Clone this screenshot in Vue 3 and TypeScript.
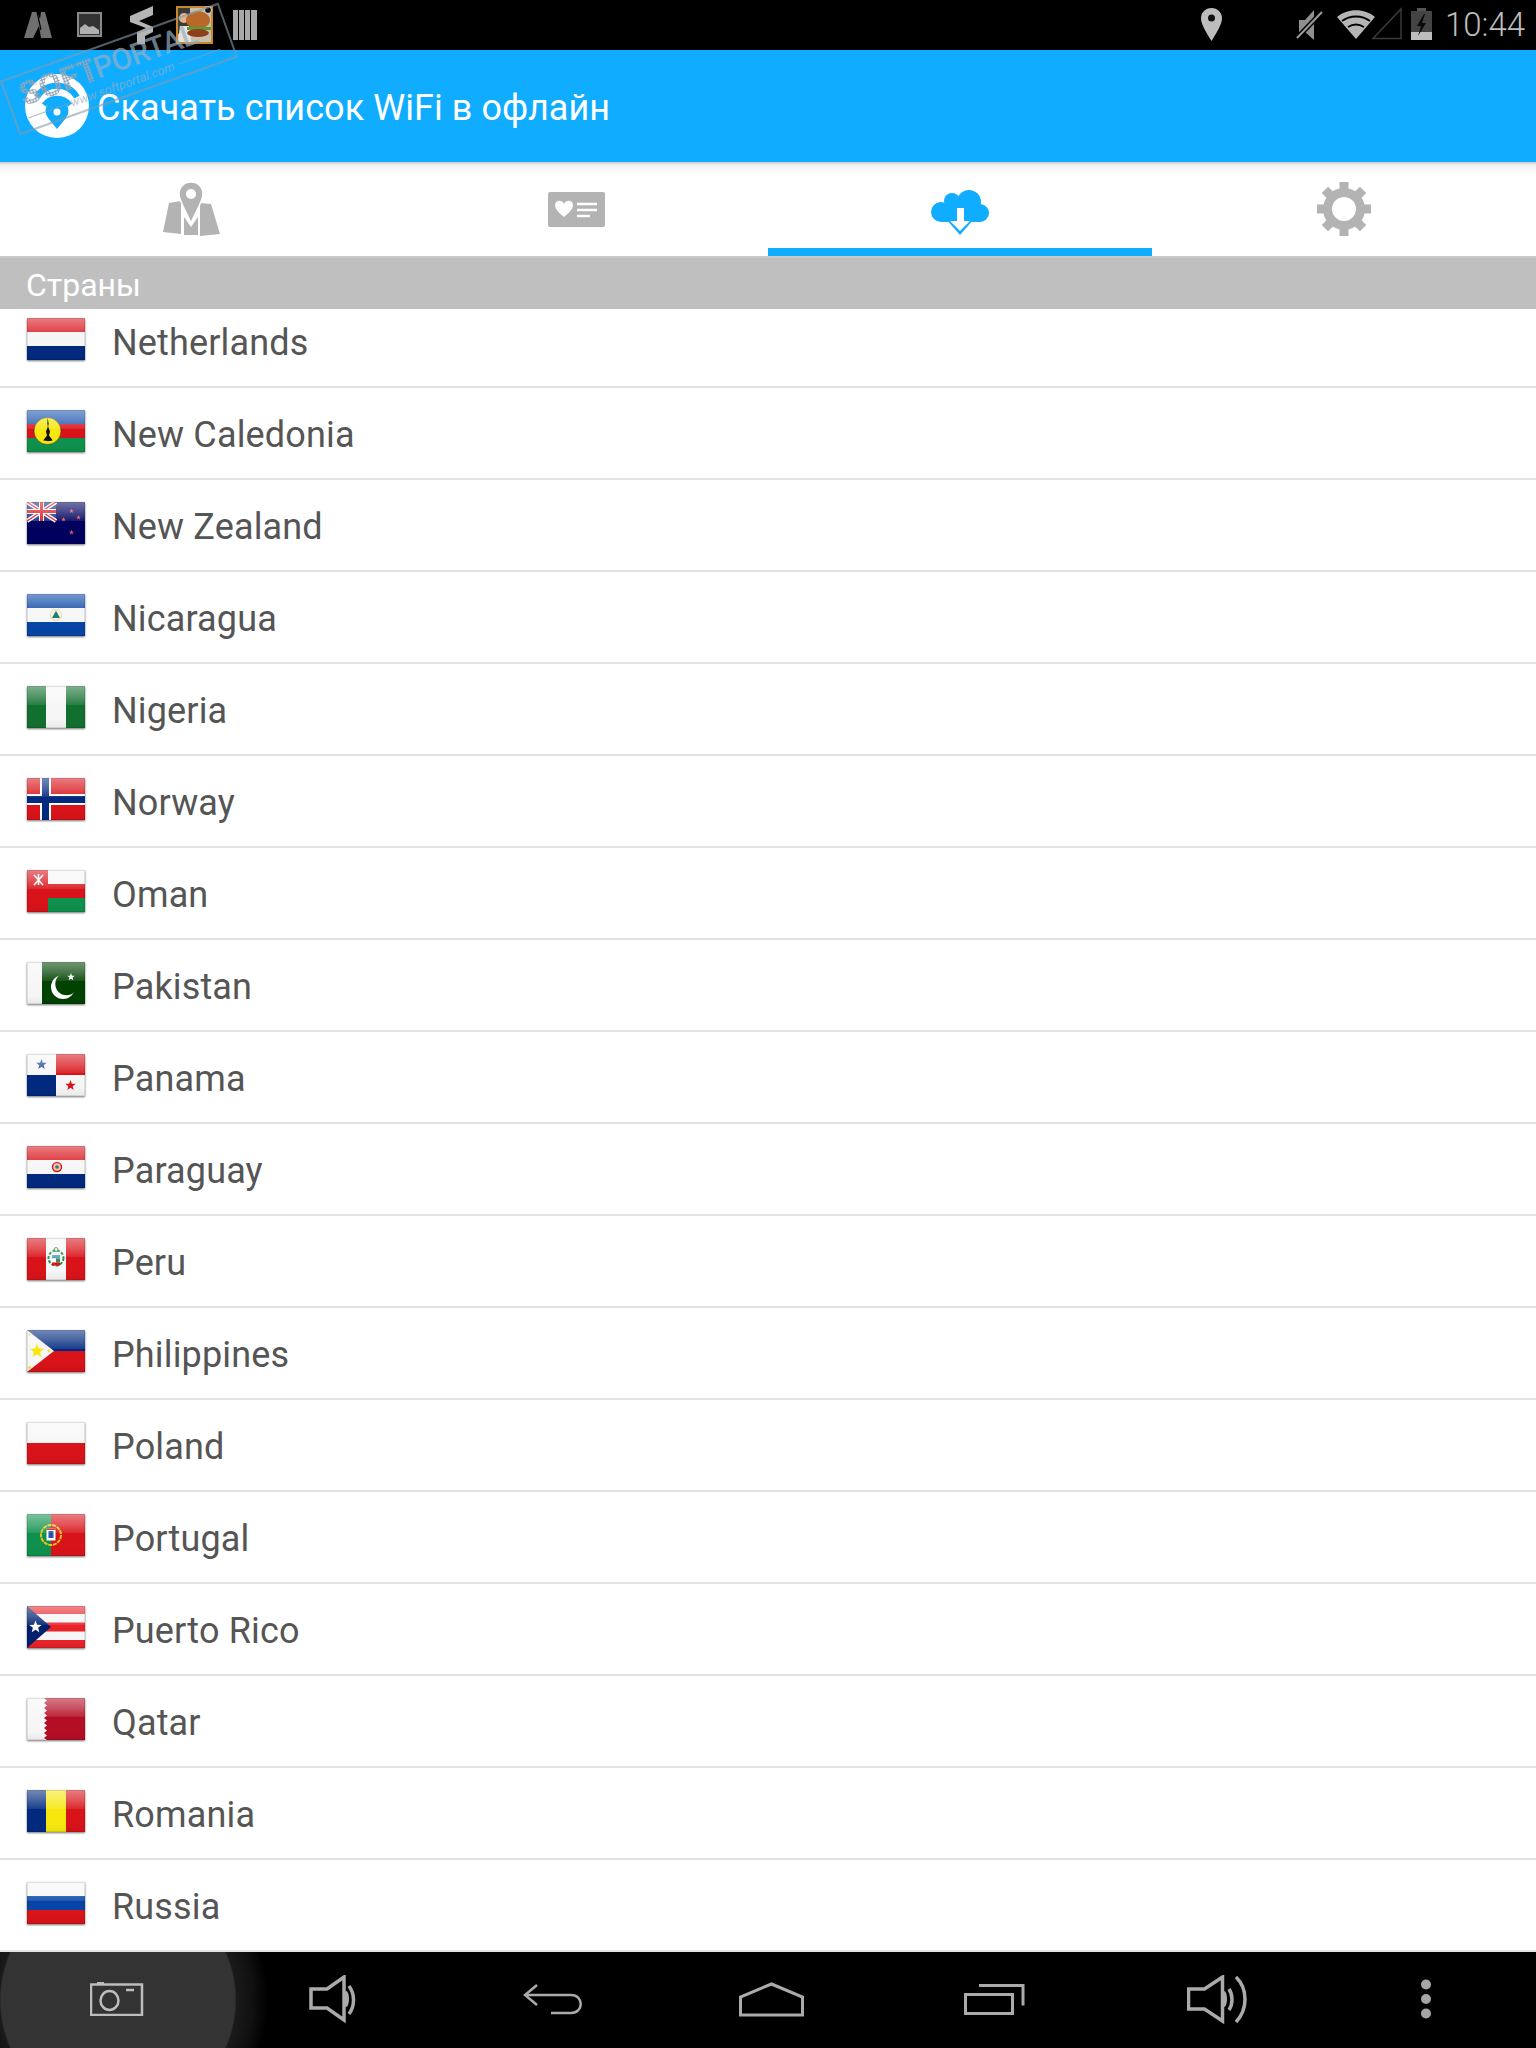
<script setup lang="ts">
const red = '#d81319'
const navy = '#012a7f'
const blue = '#0645a5'
const white = '#f6f6f6'
const green = '#0f914d'
const dark = '#12702f'

function rect(x: number, y: number, w: number, h: number, fill: string) {
  return `<rect x="${x}" y="${y}" width="${w}" height="${h}" fill="${fill}"/>`
}

function circle(cx: number, cy: number, r: number, fill: string, extra = '') {
  return `<circle cx="${cx}" cy="${cy}" r="${r}" fill="${fill}" ${extra}/>`
}

function star(cx: number, cy: number, r: number, fill: string) {
  const pts: string[] = []
  for (let i = 0; i < 10; i++) {
    const a = -Math.PI / 2 + (i * Math.PI) / 5
    const d = i % 2 ? r * 0.42 : r
    pts.push(`${(cx + d * Math.cos(a)).toFixed(2)},${(cy + d * Math.sin(a)).toFixed(2)}`)
  }
  return `<polygon points="${pts.join(' ')}" fill="${fill}"/>`
}

function bands(top: string, mid: string, bottom: string) {
  return rect(0, 0, 58, 14, top) + rect(0, 14, 58, 14, mid) + rect(0, 28, 58, 14, bottom)
}

function pales(left: string, mid: string, right: string) {
  return rect(0, 0, 19, 42, left) + rect(19, 0, 20, 42, mid) + rect(39, 0, 19, 42, right)
}

const countries = [
  { name: 'Netherlands', art: bands(red, white, navy) },
  {
    name: 'New Caledonia',
    art: bands('#1f55b0', red, green) + circle(20.5, 21, 13.5, '#f7e70f', 'stroke="#222" stroke-width=".5"')
      + '<path d="M20.500 7.500l1.300 6-.6 3 1.800 5-1 4 3.500 4.500c1 1.500-10 1.500-9 0l3.500-4.500-1-4 1.800-5-.6-3z" fill="#111"/>',
  },
  {
    name: 'New Zealand',
    art: rect(0, 0, 58, 42, '#00005e') + rect(0, 0, 29, 19, '#1a2a80')
      + '<path d="M0 0l29 19M29 0L0 19" stroke="#fff" stroke-width="4"/>'
      + '<path d="M0 0l29 19M29 0L0 19" stroke="#d81319" stroke-width="1.4"/>'
      + rect(12, 0, 5, 19, '#fff') + rect(0, 7, 29, 5, '#fff') + rect(13, 0, 3, 19, red) + rect(0, 8, 29, 3, red)
      + star(44.5, 9, 2.4, '#e0525c') + star(51.5, 15.5, 2.4, '#e0525c') + star(36.5, 17.5, 2.4, '#e0525c') + star(44.5, 30.5, 2.6, '#e0525c'),
  },
  {
    name: 'Nicaragua',
    art: bands(blue, white, blue) + circle(29, 21, 5.5, 'none', 'stroke="#e8dd8a" stroke-width="1"')
      + '<polygon points="29,16.5 33,24 25,24" fill="#1d7f70"/>',
  },
  { name: 'Nigeria', art: pales(dark, white, dark) },
  {
    name: 'Norway',
    art: rect(0, 0, 58, 42, red) + rect(13, 0, 11, 42, '#fff') + rect(0, 16, 58, 11, '#fff') + rect(15, 0, 7, 42, navy) + rect(0, 18, 58, 7, navy),
  },
  {
    name: 'Oman',
    art: rect(0, 0, 58, 42, red) + rect(21, 0, 37, 14, white) + rect(21, 28, 37, 14, green)
      + '<path d="M7 5l9 10M16 5L7 15M11.5 4v11" stroke="#fff" stroke-width="1.600"/>',
  },
  {
    name: 'Pakistan',
    art: rect(0, 0, 15, 42, white) + rect(15, 0, 43, 42, '#004200') + circle(36, 25, 12, '#fff') + circle(39.5, 22, 11.2, '#004200')
      + star(44, 15, 4, '#fff'),
  },
  {
    name: 'Panama',
    art: rect(0, 0, 29, 21, white) + rect(29, 0, 29, 21, red) + rect(0, 21, 29, 21, navy) + rect(29, 21, 29, 21, white)
      + star(14.5, 10.5, 5.5, '#1a45a0') + star(43.5, 31.5, 5.5, red),
  },
  {
    name: 'Paraguay',
    art: bands(red, white, navy) + circle(30, 21, 4.5, '#e8c8a0', `stroke="${red}" stroke-width="1.4"`) + circle(30, 21, 1.8, '#3a6fa8'),
  },
  {
    name: 'Peru',
    art: pales(red, white, red) + circle(29, 20, 7.5, 'none', 'stroke="#2d8a4b" stroke-width="2" stroke-dasharray="3 1.5"')
      + rect(25, 17, 8, 3.5, '#5aa4c8') + rect(25, 20.5, 4, 4, '#fff') + rect(29, 20.5, 4, 4, '#3d8f50') + rect(25, 24.5, 8, 3, red)
      + circle(29, 11.5, 2, 'none', 'stroke="#2d8a4b" stroke-width="1"'),
  },
  {
    name: 'Philippines',
    art: rect(0, 0, 58, 21, navy) + rect(0, 21, 58, 21, red) + '<polygon points="0,0 27,21 0,42" fill="#f6f6f6"/>'
      + star(10, 21, 7.5, '#f7e70f') + circle(10, 21, 3.6, '#f7e70f') + star(2.5, 4.5, 2, '#f0d820') + star(2.5, 37.5, 2, '#f0d820') + star(22, 21, 2, '#f0d820'),
  },
  { name: 'Poland', art: rect(0, 0, 58, 21, white) + rect(0, 21, 58, 21, red) },
  {
    name: 'Portugal',
    art: rect(0, 0, 24, 42, green) + rect(24, 0, 34, 42, red) + circle(24, 21, 10, 'none', 'stroke="#e8c81a" stroke-width="2" stroke-dasharray="4 .8"')
      + rect(19.5, 14.5, 9, 12, '#fff') + rect(21.5, 17, 5, 7, '#2a55a5') + rect(19.5, 14.5, 9, 1.5, red),
  },
  {
    name: 'Puerto Rico',
    art: rect(0, 0, 58, 42, '#e8232a') + rect(0, 8, 58, 8.5, white) + rect(0, 25.5, 58, 8.5, white)
      + '<polygon points="0,0 24,21 0,42" fill="#00206e"/>' + star(8.5, 21, 6.5, '#fff'),
  },
  {
    name: 'Qatar',
    art: rect(0, 0, 58, 42, '#b40e25')
      + '<polygon points="0,0 17,0 20,2.5 17,5 20,7.5 17,10 20,12.5 17,15 20,17.5 17,20 20,22.5 17,25 20,27.5 17,30 20,32.5 17,35 20,37.5 17,40 20,42 0,42" fill="#f6f6f6"/>',
  },
  { name: 'Romania', art: pales(navy, '#f7e70f', red) },
  { name: 'Russia', art: bands(white, blue, red) },
]

const gearAngles = [0, 45, 90, 135, 180, 225, 270, 315]
</script>

<template>
  <div class="screen">
    <header class="status">
      <svg class="notif" width="270" height="50" viewBox="0 0 270 50" aria-hidden="true">
        <path d="M24 38 32 12h5l3 7 1-7h4l7 26H41l-2-12-6 12z" fill="#707070" />
        <path d="M37 12l4 18" stroke="#000" stroke-width="1.200" />
        <rect x="78" y="13" width="23" height="23" fill="#333" stroke="#8a8a8a" stroke-width="2" />
        <path d="M80 34V28l5-4 4 3 4-1 6 4v4z" fill="#b0b0b0" />
        <path d="M130 16 153 6v9l-14 6 14 6v5l-8 4v8h-8V32l9-4-16-6z" fill="#b5b5b5" />
        <rect x="177" y="7" width="35" height="36" fill="#c9bfae" stroke="#c8872a" stroke-width="2" />
        <path d="M178 8h12v20l-12 6z" fill="#3a3a38" />
        <circle cx="184" cy="18" r="5" fill="#e3b48c" />
        <path d="M180 26h9l2 16h-13z" fill="#e9e4da" />
        <ellipse cx="198" cy="20" rx="12" ry="9" fill="#b8692a" />
        <rect x="187" y="27" width="24" height="3" fill="#5d9a35" />
        <ellipse cx="198" cy="33" rx="11" ry="4" fill="#8e3f1e" />
        <circle cx="208" cy="10" r="3.500" fill="#111" stroke="#ddd" />
        <g fill="#a8a8a8">
          <rect x="233" y="10" width="5" height="30" />
          <rect x="239" y="10" width="5" height="30" />
          <rect x="245" y="10" width="5" height="30" />
          <rect x="251" y="10" width="6" height="30" />
        </g>
      </svg>

      <svg class="sys" width="250" height="50" viewBox="1190 0 250 50" aria-hidden="true">
        <path d="M1211.500 8c6 0 10.500 4.500 10.500 10.500 0 6-6 15-10.500 22.500-4.500-7.500-10.500-16.500-10.500-22.500C1201 12.500 1205.500 8 1211.500 8z" fill="#bdbdbd" />
        <circle cx="1211.500" cy="18" r="3.500" fill="#111" />
        <path d="M1299 20h6l9-10v30l-9-8h-6z" fill="#8f8f8f" />
        <path d="M1297 38 1322 12" stroke="#000" stroke-width="5" />
        <path d="M1297 38 1322 12" stroke="#9a9a9a" stroke-width="2" />
        <path d="M1337 17c10-9 28-9 38 0l-19 22z" fill="#b5b5b5" />
        <path d="M1342 21c8-6 20-6 28 0M1348 27c5-3 11-3 16 0" fill="none" stroke="#000" stroke-width="2" />
        <path d="M1373 38.500 1401 9v29.500z" fill="none" stroke="#3a3a3a" stroke-width="1.500" />
        <rect x="1417" y="8" width="9" height="3" fill="#555" />
        <rect x="1411" y="11" width="21" height="21" fill="#444" />
        <rect x="1411" y="32" width="21" height="8" fill="#bdbdbd" />
        <path d="M1424 14l-7 12h4l-3 10 8-13h-4l3-9z" fill="#0a0a0a" />
      </svg>
      <span class="clock">10:44</span>
    </header>

    <div class="actionbar">
      <svg class="logo" width="64" height="64" viewBox="25 74 64 64" aria-hidden="true">
        <circle cx="57" cy="106" r="32" fill="#fff" />
        <path d="M37 97c9-15 31-15 40 0" fill="none" stroke="#10acff" stroke-width="6" />
        <path d="M44 105c6-9 20-9 26 0" fill="none" stroke="#10acff" stroke-width="5" />
        <path d="M57 129 48 118a11.500 11.500 0 1 1 18 0z" fill="#10acff" />
        <circle cx="57" cy="112" r="3.500" fill="#fff" />
      </svg>
      <h1 class="title">Скачать список WiFi в офлайн</h1>
    </div>

    <!-- штамп поверх статус-бара и заголовка -->
    <div class="stamp" aria-hidden="true">
      <div class="stamp-main"><span class="stamp-soft">SOFT</span><span class="stamp-portal">PORTAL</span></div>
      <div class="stamp-sub"><i class="stamp-lead"></i><span>www.softportal.com</span><i></i></div>
    </div>

    <nav class="tabs">
      <div class="tab">
        <svg width="58" height="54" viewBox="163 183 58 54" aria-hidden="true">
          <g fill="#b3b3b3">
            <path d="M169 204l12-2v33l-18-2z" />
            <path d="M200 204l11 1 9 30-20 2z" />
            <path d="M184 218l7 10 7-10v18h-14z" />
          </g>
          <path d="M191 183c7 0 12 5 12 12 0 7-7 17-12 29-5-12-12-22-12-29 0-7 5-12 12-12z" fill="#b3b3b3" stroke="#fff" stroke-width="1.500" />
          <circle cx="191" cy="195" r="5" fill="#fff" />
        </svg>
      </div>
      <div class="tab">
        <svg width="57" height="35" viewBox="548 193 57 35" aria-hidden="true">
          <rect x="548" y="193" width="57" height="35" rx="2" fill="#b3b3b3" />
          <path d="M564 218c-5-4-9-8-9-12 0-5 7-6 9-1 2-5 9-4 9 1 0 4-4 8-9 12z" fill="#fff" />
          <path d="M577 205h20M577 211h20M577 217h13" stroke="#fff" stroke-width="2.500" />
        </svg>
      </div>
      <div class="tab tab-active">
        <svg width="58" height="45" viewBox="931 190 58 45" aria-hidden="true">
          <g fill="#10acff">
            <circle cx="941" cy="212" r="10" />
            <circle cx="952" cy="201" r="8" />
            <circle cx="969" cy="202" r="12" />
            <circle cx="980" cy="213" r="9" />
            <rect x="941" y="204" width="39" height="18" />
            <path d="M946 219h28l-14 16z" />
          </g>
          <path d="M957 208h7v13h6l-10 10-10-10h7z" fill="#fff" />
        </svg>
      </div>
      <div class="tab">
        <svg width="54" height="54" viewBox="-27 -27 54 54" aria-hidden="true">
          <circle r="16.500" fill="none" stroke="#b3b3b3" stroke-width="9" />
          <rect v-for="a in gearAngles" :key="a" x="-4.500" y="-27" width="9" height="9" fill="#b3b3b3" :transform="`rotate(${a})`" />
        </svg>
      </div>
    </nav>

    <div class="section">Страны</div>

    <main class="list">
      <ul class="rows">
        <li v-for="c in countries" :key="c.name" class="row">
          <span class="flag"><svg width="58" height="42" viewBox="0 0 58 42" aria-hidden="true" v-html="c.art"></svg></span>
          <span class="name">{{ c.name }}</span>
        </li>
      </ul>
    </main>

    <footer class="nav">
      <div class="press"></div>
      <div class="slot">
        <svg width="54" height="34" viewBox="91 1983 54 34" aria-hidden="true" fill="none" stroke="#bdbdbd" stroke-width="2.500">
          <rect x="92" y="1985.500" width="51" height="30.500" />
          <ellipse cx="110.500" cy="2001.500" rx="9" ry="9.500" />
          <path d="M127 1991h8M98 1984h7" stroke-width="2.500" />
        </svg>
      </div>
      <div class="slot">
        <svg width="50" height="48" viewBox="310 1975 50 48" aria-hidden="true" fill="none" stroke="#aaa" stroke-width="3.500">
          <path d="M312 1989h16l17-12v43l-17-12h-16z" />
          <path d="M350 1986c6 8 6 20 0 28" />
          <ellipse cx="347" cy="1999" rx="3" ry="8" fill="#aaa" stroke="none" />
        </svg>
      </div>
      <div class="slot">
        <svg width="60" height="31" viewBox="523 1987 60 31" aria-hidden="true" fill="none" stroke="#aaa" stroke-width="2.500">
          <path d="M537 1988l-12 10 12 10" />
          <path d="M525 1998h46c13 0 13 18 0 18h-20" />
        </svg>
      </div>
      <div class="slot">
        <svg width="65" height="35" viewBox="739 1983 65 35" aria-hidden="true" fill="none" stroke="#aaa" stroke-width="3">
          <path d="M740.500 2016v-18l31-13 31 13v18z" />
        </svg>
      </div>
      <div class="slot">
        <svg width="61" height="31" viewBox="964 1987 61 31" aria-hidden="true" fill="none" stroke="#aaa" stroke-width="3">
          <rect x="965.500" y="1997.500" width="47" height="19" />
          <path d="M979 1988.500h44v20" />
        </svg>
      </div>
      <div class="slot">
        <svg width="61" height="49" viewBox="1187 1975 61 49" aria-hidden="true" fill="none" stroke="#aaa" stroke-width="3.500">
          <path d="M1188.500 1989h16l18-12v44l-18-12h-16z" />
          <path d="M1229 1989c4 6 4 15 0 21" />
          <path d="M1236 1977c12 12 12 32 0 45" />
          <ellipse cx="1224" cy="1999" rx="3" ry="8" fill="#aaa" stroke="none" />
        </svg>
      </div>
      <div class="slot">
        <svg width="12" height="40" viewBox="0 0 12 40" aria-hidden="true" fill="#a5a5a5">
          <circle cx="6" cy="5.500" r="5" />
          <circle cx="6" cy="20" r="5" />
          <circle cx="6" cy="34.500" r="5" />
        </svg>
      </div>
    </footer>
  </div>
</template>

<style scoped>
.screen {
  position: relative;
  display: flex;
  flex-direction: column;
  width: 1536px;
  height: 2048px;
  overflow: hidden;
  background: #fff;
  font-family: Roboto, "Noto Sans", sans-serif;
}

.status {
  display: flex;
  align-items: center;
  flex: 0 0 50px;
  background: #000;
}

.notif {
  display: block;
}

.sys {
  display: block;
  margin-left: 920px;
}

.clock {
  margin-left: 5px;
  color: #bdbdbd;
  font-size: 33px;
  font-weight: 300;
  line-height: 50px;
}

.actionbar {
  display: flex;
  align-items: center;
  flex: 0 0 112px;
  gap: 8px;
  padding-left: 25px;
  background: #10acff;
}

.logo {
  flex: none;
}

.title {
  margin: 0;
  padding-top: 4px;
  color: #fff;
  font-size: 36px;
  font-weight: 400;
  line-height: 42px;
  letter-spacing: 0.06px;
}

.stamp {
  position: absolute;
  top: 40px;
  left: 3px;
  width: 232px;
  height: 58px;
  box-sizing: border-box;
  border: 2px solid rgb(135 155 170 / 60%);
  padding: 0 12px;
  color: rgb(150 175 195 / 70%);
  transform: rotate(-19.7deg);
  pointer-events: none;
}

.stamp-main {
  display: flex;
  height: 34px;
  margin-top: 1px;
  font-size: 30px;
  font-weight: 500;
  line-height: 36px;
}

.stamp-soft {
  width: 79px;
  background: radial-gradient(circle closest-side, rgb(150 165 180) 70%, transparent 100%) 0 0 / 3px 3px;
  -webkit-background-clip: text;
  background-clip: text;
  color: transparent;
  font-size: 33px;
  font-weight: 900;
}

.stamp-portal {
  letter-spacing: -0.5px;
}

.stamp-sub {
  display: flex;
  align-items: center;
  gap: 4px;
  font-size: 12.500px;
  font-style: italic;
  line-height: 15px;
  white-space: nowrap;
}

.stamp-sub i {
  flex: 1;
  height: 1px;
  background: rgb(140 160 175 / 70%);
}

.stamp-sub .stamp-lead {
  flex: 0 0 41px;
}

.tabs {
  display: grid;
  grid-template-columns: repeat(4, 1fr);
  flex: 0 0 94px;
  background: linear-gradient(#c9c9c9, #f1f1f1 3px, #fff 12px);
}

.tab {
  display: flex;
  align-items: center;
  justify-content: center;
}

.tab-active {
  box-sizing: border-box;
  padding-top: 15px;
  border-bottom: 8px solid #10acff;
}

.section {
  flex: 0 0 53px;
  box-sizing: border-box;
  border-top: 2px solid #c9c9c9;
  padding: 6px 0 0 26px;
  background: #bfbfbf;
  color: #fff;
  font-size: 32px;
  line-height: 43px;
}

.list {
  flex: 1;
  min-height: 0;
  overflow: hidden;
}

.rows {
  margin: -13px 0 0;
  padding: 0;
  list-style: none;
}

.row {
  display: flex;
  align-items: center;
  box-sizing: border-box;
  height: 92px;
  border-bottom: 2px solid #e3e3e3;
  padding-left: 27px;
}

.flag {
  position: relative;
  flex: none;
  width: 58px;
  height: 42px;
  margin: -4px 27px 0 0;
  box-shadow: 0 1px 2px rgb(0 0 0 / 55%);
}

.flag svg {
  display: block;
}

.flag::after {
  content: "";
  position: absolute;
  inset: 0;
  background: linear-gradient(rgb(255 255 255 / 45%), rgb(255 255 255 / 28%) 24%, rgb(255 255 255 / 10%) 44%, transparent 46%, transparent 80%, rgb(0 0 0 / 5%));
  box-shadow: inset 0 0 0 1px rgb(0 0 0 / 10%);
}

.name {
  padding-top: 4px;
  color: #555;
  font-size: 36px;
  line-height: 42px;
  letter-spacing: 0.15px;
}

.nav {
  position: relative;
  display: grid;
  grid-template-columns: 234px 200px 238px 198px 248px 198px 220px;
  flex: 0 0 96px;
  overflow: hidden;
  background: #000;
}

.press {
  position: absolute;
  top: -102px;
  left: -32px;
  width: 300px;
  height: 300px;
  border-radius: 50%;
  background: radial-gradient(circle closest-side, #333 0, #333 78%, #1a1a1a 79%, #101010 90%, transparent 100%);
}

.slot {
  position: relative;
  display: flex;
  align-items: center;
  justify-content: center;
  padding-bottom: 2px;
}
</style>

<style>
html,
body {
  margin: 0;
  background: #fff;
}
</style>
